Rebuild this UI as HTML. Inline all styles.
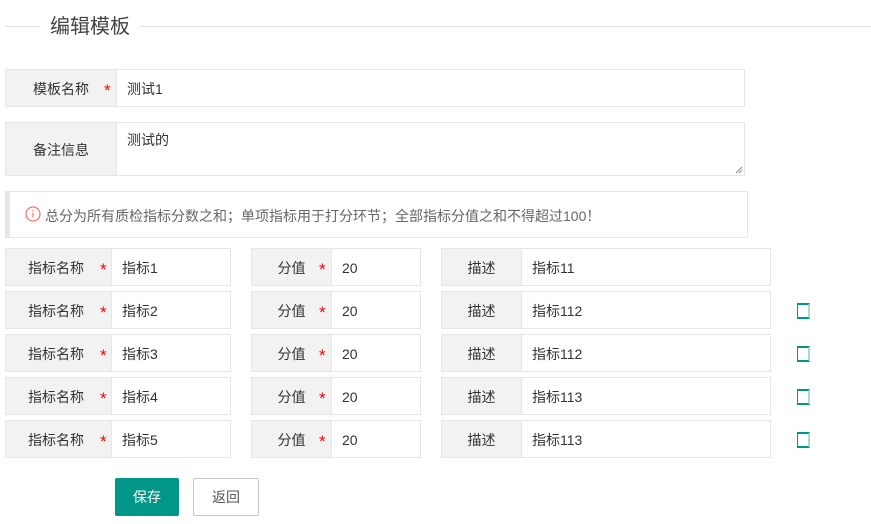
<!DOCTYPE html>
<html><head><meta charset="utf-8"><style>
*{box-sizing:border-box;margin:0;padding:0}
body{width:871px;height:524px;background:#fff;font-family:"Liberation Sans","Noto Sans CJK SC",sans-serif;font-size:14px;color:#333;position:relative;overflow:hidden}
.a{position:absolute}
.lbl{position:absolute;background:#f2f2f2;border:1px solid #e6e6e6;text-align:center;color:#333;line-height:38px}
.inp{position:absolute;background:#fff;border:1px solid #e6e6e6;padding-left:10px;color:#333;line-height:38px}
.st{position:absolute;color:#f00;font-size:17px;line-height:17px}
.cb{position:absolute;width:13px;height:16px;border-top:2px solid #009688;border-bottom:2px solid #009688;border-left:1px solid #009688;border-right:2px solid #a7ddd6;}
.r{position:absolute;left:0}
.r .l1{left:5px;top:0;width:107px;height:38px;padding-right:5px}
.r .s1{left:100px;top:13px}
.r .i1{left:111px;top:0;width:120px;height:38px}
.r .l2{left:251px;top:0;width:81px;height:38px}
.r .s2{left:319px;top:13px}
.r .i2{left:331px;top:0;width:90px;height:38px}
.r .l3{left:441px;top:0;width:81px;height:38px}
.r .i3{left:521px;top:0;width:250px;height:38px}
</style></head><body>
<div class="a" style="left:5px;top:26px;width:35px;height:1px;background:#e2e2e2"></div>
<div class="a" style="left:140px;top:26px;width:731px;height:1px;background:#e2e2e2"></div>
<div class="a" style="left:50px;top:14px;font-size:20px;color:#444;line-height:26px">编辑模板</div>

<div class="lbl" style="left:5px;top:69px;width:112px;height:38px">模板名称</div>
<div class="st" style="left:104px;top:82px">*</div>
<div class="inp" style="left:116px;top:69px;width:629px;height:38px">测试1</div>

<div class="lbl" style="left:5px;top:122px;width:112px;height:54px;line-height:54px">备注信息</div>
<div class="inp" style="left:116px;top:122px;width:629px;height:54px;line-height:34px">测试的</div>
<svg class="a" style="left:735px;top:166px" width="8" height="8"><path d="M1 7L7 1M4 7L7 4" stroke="#888" stroke-width="1"/></svg>

<div class="a" style="left:5px;top:191px;width:743px;height:47px;border:1px solid #e6e6e6;border-left:5px solid #e6e6e6;"></div>
<svg class="a" style="left:25px;top:206px" width="16" height="16"><circle cx="8" cy="8" r="7" fill="none" stroke="#f55" stroke-width="1"/><rect x="7.5" y="4" width="1" height="1.3" fill="#f55"/><rect x="7.5" y="6.5" width="1" height="5" fill="#f55"/></svg>
<div class="a" style="left:45px;top:206px;color:#666;font-size:14px;line-height:20px">总分为所有质检指标分数之和；单项指标用于打分环节；全部指标分值之和不得超过100！</div>

<div class="r" style="top:248px">
<div class="lbl l1">指标名称</div><div class="st s1">*</div><div class="inp i1">指标1</div>
<div class="lbl l2">分值</div><div class="st s2">*</div><div class="inp i2">20</div>
<div class="lbl l3">描述</div><div class="inp i3">指标11</div>
</div>
<div class="r" style="top:291px">
<div class="lbl l1">指标名称</div><div class="st s1">*</div><div class="inp i1">指标2</div>
<div class="lbl l2">分值</div><div class="st s2">*</div><div class="inp i2">20</div>
<div class="lbl l3">描述</div><div class="inp i3">指标112</div>
<div class="cb" style="left:797px;top:12px"></div>
</div>
<div class="r" style="top:334px">
<div class="lbl l1">指标名称</div><div class="st s1">*</div><div class="inp i1">指标3</div>
<div class="lbl l2">分值</div><div class="st s2">*</div><div class="inp i2">20</div>
<div class="lbl l3">描述</div><div class="inp i3">指标112</div>
<div class="cb" style="left:797px;top:12px"></div>
</div>
<div class="r" style="top:377px">
<div class="lbl l1">指标名称</div><div class="st s1">*</div><div class="inp i1">指标4</div>
<div class="lbl l2">分值</div><div class="st s2">*</div><div class="inp i2">20</div>
<div class="lbl l3">描述</div><div class="inp i3">指标113</div>
<div class="cb" style="left:797px;top:12px"></div>
</div>
<div class="r" style="top:420px">
<div class="lbl l1">指标名称</div><div class="st s1">*</div><div class="inp i1">指标5</div>
<div class="lbl l2">分值</div><div class="st s2">*</div><div class="inp i2">20</div>
<div class="lbl l3">描述</div><div class="inp i3">指标113</div>
<div class="cb" style="left:797px;top:12px"></div>
</div>

<div class="a" style="left:115px;top:478px;width:64px;height:38px;background:#009688;color:#fff;border-radius:2px;text-align:center;line-height:38px">保存</div>
<div class="a" style="left:193px;top:478px;width:66px;height:38px;border:1px solid #c9c9c9;border-radius:2px;color:#555;text-align:center;line-height:37px">返回</div>
</body></html>
